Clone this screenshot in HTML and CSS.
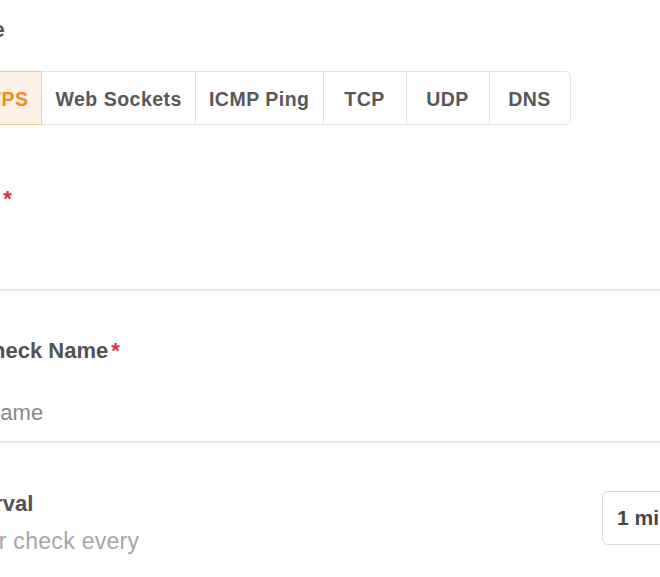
FILE: index.html
```html
<!DOCTYPE html>
<html lang="en">
<head>
<meta charset="utf-8">
<title>New Check</title>
<link rel="stylesheet" href="styles.css">
</head>
<body>
<form class="check-form">
  <h2 class="section-title">Type</h2>
  <div class="tabs" role="tablist">
    <button type="button" class="tab tab-active">HTTPS</button>
    <button type="button" class="tab">Web Sockets</button>
    <button type="button" class="tab">ICMP Ping</button>
    <button type="button" class="tab">TCP</button>
    <button type="button" class="tab">UDP</button>
    <button type="button" class="tab">DNS</button>
  </div>
  <div class="field field-first">
    <label class="field-label" for="url">URL<span class="required">*</span></label>
    <input class="field-input" id="url" type="text">
  </div>
  <div class="field">
    <label class="field-label" for="name">A Check Name<span class="required">*</span></label>
    <input class="field-input" id="name" type="text" placeholder="My Name">
  </div>
  <div class="interval-row">
    <div class="interval-text">
      <div class="field-label">Interval</div>
      <div class="field-hint">Your check every</div>
    </div>
    <div class="select">
      <span>1 minute</span>
      <svg class="select-caret" width="14" height="14" viewBox="0 0 14 14"><path d="M3 5l4 4 4-4" fill="none" stroke="#777" stroke-width="1.8" stroke-linecap="round" stroke-linejoin="round"/></svg>
    </div>
  </div>
</form>
</body>
</html>
```

FILE: styles.css
```css
* {
  box-sizing: border-box;
}

html,
body {
  margin: 0;
  padding: 0;
  overflow: hidden;
  background: #ffffff;
}

body {
  width: 660px;
  height: 577px;
  font-family: "Liberation Sans", Arial, sans-serif;
  color: #535353;
}

.check-form {
  width: 837px;
  margin-left: -45px;
  padding-top: 17px;
}

.section-title {
  margin: 0;
  font-size: 22px;
  line-height: 26px;
  font-weight: 700;
  color: #535353;
}

.tabs {
  display: flex;
  width: max-content;
  margin: 28px 0 0 -7px;
}

.tab {
  height: 54px;
  min-width: 84px;
  margin: 0 0 0 -1px;
  padding: 3px 13px 0;
  border: 1px solid #e3e3e3;
  background: #ffffff;
  font-family: "Liberation Sans", Arial, sans-serif;
  font-size: 19.5px;
  font-weight: 700;
  line-height: 1;
  letter-spacing: 0.5px;
  color: #585858;
}

.tab:first-child {
  margin-left: 0;
  border-radius: 5px 0 0 5px;
}

.tab:last-child {
  min-width: 82px;
  border-radius: 0 5px 5px 0;
}

.tab-active {
  position: relative;
  z-index: 1;
  background: #fdf0e4;
  border-color: #f8c28b;
  color: #f28a26;
}

.field {
  display: flex;
  flex-direction: column;
  margin-top: 47px;
}

.field-first {
  margin-top: 61px;
}

.field-label {
  display: block;
  font-size: 22px;
  line-height: 26px;
  font-weight: 700;
  color: #535353;
}

.required {
  margin-left: 3px;
  color: #e8274b;
}

.field-input {
  display: block;
  width: 100%;
  height: 79px;
  margin: 0;
  padding: 36px 0 15px;
  border: 0;
  border-bottom: 2px solid #e6e6eb;
  border-radius: 0;
  outline: none;
  background: transparent;
  font-family: "Liberation Sans", Arial, sans-serif;
  font-size: 22px;
  line-height: 26px;
  text-indent: -6px;
  color: #333333;
}

.field-input::placeholder {
  color: #8a8a8a;
}

.interval-row {
  display: flex;
  justify-content: space-between;
  align-items: flex-start;
  margin-top: 48px;
}

.field-hint {
  margin-top: 10px;
  font-size: 23px;
  line-height: 28px;
  letter-spacing: 0.3px;
  text-indent: 4px;
  color: #a6a6a6;
}

.select {
  display: flex;
  align-items: center;
  justify-content: space-between;
  width: 190px;
  height: 54px;
  padding: 0 16px 0 14px;
  border: 1px solid #dcdcdc;
  border-radius: 6px;
  font-size: 21px;
  font-weight: 700;
  color: #474747;
}

.select-caret {
  flex: none;
}
```
